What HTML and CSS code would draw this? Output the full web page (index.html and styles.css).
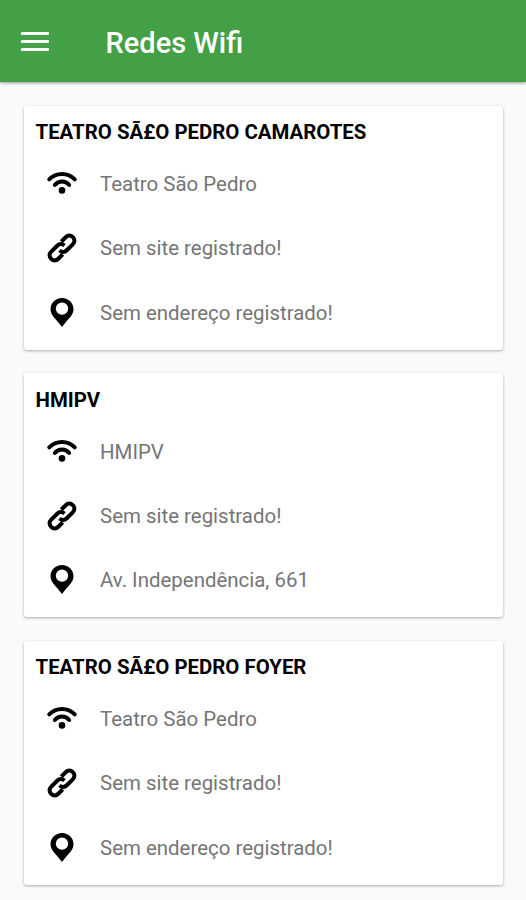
FILE: index.html
```html
<!DOCTYPE html>
<html lang="pt-BR">
<head>
    <meta charset="UTF-8">
    <meta name="viewport" content="width=device-width, initial-scale=1.0">
    <title>Redes Wifi</title>
    <link rel="stylesheet" href="styles.css">
</head>
<body>
    <svg class="sprite" width="0" height="0">
        <symbol id="wifi" viewBox="0 0 32 32">
            <g fill="none" stroke="#000" stroke-width="3.9" stroke-linecap="round">
                <path d="M3.2 11.4C10 4.2 22 4.2 28.8 11.4"/>
                <path d="M8.8 17C12.8 12.4 19.2 12.4 23.2 17"/>
            </g>
            <circle cx="16" cy="22.4" r="3.3"/>
        </symbol>
        <symbol id="link" viewBox="0 0 32 32">
            <g fill="none" stroke="#000" stroke-width="4" transform="rotate(-45 16 16)">
                <path d="M19.6 16C19.2 12.8 17.2 11 14.2 11H5.8C2.6 11 0.7 13 0.7 16S2.6 21 5.8 21H12"/>
                <path d="M12.4 16C12.8 19.2 14.8 21 17.8 21H26.2C29.4 21 31.3 19 31.3 16S29.4 11 26.2 11H20"/>
            </g>
        </symbol>
        <symbol id="pin" viewBox="0 0 32 32">
            <path fill-rule="evenodd" d="M16 1C9.4 1 4.5 6 4.5 12.2C4.5 18.5 10.8 22.5 16 30C21.2 22.5 27.5 18.5 27.5 12.2C27.5 6 22.6 1 16 1ZM16 5.4A6.2 6.2 0 1 1 16 17.8A6.2 6.2 0 1 1 16 5.4Z"/>
        </symbol>
    </svg>

    <header class="toolbar">
        <button class="menu-button" type="button" aria-label="Menu">
            <span></span>
            <span></span>
            <span></span>
        </button>
        <h1>Redes Wifi</h1>
    </header>

    <main class="network-list">
        <section class="card">
            <h2>TEATRO SÃ£O PEDRO CAMAROTES</h2>
            <ul>
                <li><svg class="icon"><use href="#wifi"/></svg><span class="name">Teatro São Pedro</span></li>
                <li><svg class="icon"><use href="#link"/></svg><span class="site">Sem site registrado!</span></li>
                <li><svg class="icon"><use href="#pin"/></svg><span class="address">Sem endereço registrado!</span></li>
            </ul>
        </section>

        <section class="card">
            <h2>HMIPV</h2>
            <ul>
                <li><svg class="icon"><use href="#wifi"/></svg><span class="name">HMIPV</span></li>
                <li><svg class="icon"><use href="#link"/></svg><span class="site">Sem site registrado!</span></li>
                <li><svg class="icon"><use href="#pin"/></svg><span class="address">Av. Independência, 661</span></li>
            </ul>
        </section>

        <section class="card">
            <h2>TEATRO SÃ£O PEDRO FOYER</h2>
            <ul>
                <li><svg class="icon"><use href="#wifi"/></svg><span class="name">Teatro São Pedro</span></li>
                <li><svg class="icon"><use href="#link"/></svg><span class="site">Sem site registrado!</span></li>
                <li><svg class="icon"><use href="#pin"/></svg><span class="address">Sem endereço registrado!</span></li>
            </ul>
        </section>
    </main>
</body>
</html>
```
FILE: styles.css
```css
* {
    box-sizing: border-box;
}

body {
    margin: 0;
    height: 900px;
    overflow: hidden;
    background-color: #fafafa;
    font-family: Roboto, sans-serif;
}

.sprite {
    display: block;
}

.toolbar {
    display: flex;
    align-items: center;
    height: 82px;
    padding: 4px 21px 0;
    background-color: #43a047;
    box-shadow: 0 1px 3px rgba(0,0,0,0.4);
}

.menu-button {
    display: flex;
    flex-direction: column;
    gap: 5px;
    width: 28px;
    margin: 0 56.5px 4px 0;
    padding: 0;
    border: none;
    background: none;
}

.menu-button span {
    height: 3px;
    border-radius: 1px;
    background-color: white;
}

h1 {
    margin: 0;
    color: white;
    font-size: 29px;
    font-weight: 500;
    line-height: 36px;
}

.network-list {
    display: flex;
    flex-direction: column;
    gap: 23.5px;
    padding: 23.6px 23px 0 24px;
}

.card {
    height: 244px;
    padding: 12.5px 12px 12px 11.5px;
    background-color: white;
    border-radius: 3px;
    box-shadow: 0 1px 3px rgba(0,0,0,0.32);
}

h2 {
    margin: 0;
    color: #000;
    font-size: 20.4px;
    font-weight: 700;
    line-height: 28px;
}

ul {
    margin: 5.9px 0 0;
    padding: 0;
    list-style: none;
}

li {
    display: flex;
    align-items: center;
    height: 64.3px;
    color: #757575;
    font-size: 20.45px;
}

.icon {
    width: 32px;
    height: 32px;
    margin: 0 22px 0 10.5px;
}
```
